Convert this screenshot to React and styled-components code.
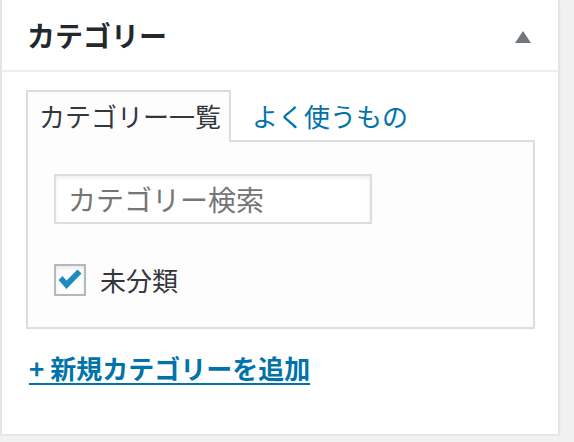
import React, { useState } from "react";
import styled, { createGlobalStyle } from "styled-components";

const GlobalStyle = createGlobalStyle`
  html, body {
    margin: 0;
    padding: 0;
    background: #f1f1f1;
  }
  body {
    font-family: "Noto Sans CJK JP", "Noto Sans", sans-serif;
    color: #32373c;
  }
`;

const PostBox = styled.div`
  width: 556px;
  border: 2px solid #e5e5e5;
  border-top: none;
  background: #fff;
  box-shadow: 0 2px 2px rgba(0, 0, 0, 0.04);
  padding-bottom: 48px;
`;

const Header = styled.div`
  height: 70px;
  display: flex;
  align-items: center;
  justify-content: space-between;
  padding: 0 27px 0 25px;
  border-bottom: 2px solid #eee;
`;

const Title = styled.h2`
  margin: 0;
  font-size: 28px;
  font-weight: 700;
  line-height: 1;
  color: #23282d;
`;

const Toggle = styled.button`
  width: 16px;
  height: 12px;
  padding: 0;
  border: none;
  background: transparent;
  border-left: 8px solid transparent;
  border-right: 8px solid transparent;
  border-bottom: 12px solid #72777c;
  box-sizing: border-box;
  cursor: pointer;
  margin-top: 4px;
`;

const Inside = styled.div`
  padding: 18px 23px 0 24px;
`;

const Tabs = styled.ul`
  display: flex;
  margin: 0;
  padding: 0;
  list-style: none;
`;

const Tab = styled.li`
  position: relative;
  z-index: 1;
  height: 50px;
  margin-bottom: -2px;
  padding: ${(p) => (p.$active ? "0 8px 0 11px" : "0 0 0 19px")};
  border: 2px solid ${(p) => (p.$active ? "#ddd" : "transparent")};
  border-bottom: none;
  background: ${(p) => (p.$active ? "#fdfdfd" : "transparent")};
  font-size: 26px;
  line-height: 48px;
  color: ${(p) => (p.$active ? "#32373c" : "#0073aa")};
  cursor: pointer;
  white-space: nowrap;
`;

const TabsPanel = styled.div`
  border: 2px solid #ddd;
  background: #fdfdfd;
  padding: 32px 26px 31px 26px;
`;

const SearchInput = styled.input`
  display: block;
  box-sizing: border-box;
  width: 318px;
  height: 50px;
  margin: 0;
  padding: 0 12px;
  border: 2px solid #ddd;
  background: #fff;
  box-shadow: inset 0 2px 4px rgba(0, 0, 0, 0.07);
  font-family: inherit;
  font-size: 28px;
  color: #32373c;
  outline: none;

  ::placeholder {
    color: #72777c;
  }
`;

const CheckRow = styled.label`
  display: flex;
  align-items: center;
  gap: 14px;
  margin-top: 40px;
  font-size: 26px;
  line-height: 32px;
  color: #32373c;
  cursor: pointer;
`;

const CheckBox = styled.span`
  width: 32px;
  height: 32px;
  box-sizing: border-box;
  border: 2px solid #b4b9be;
  background: #fff;
  box-shadow: inset 0 2px 4px rgba(0, 0, 0, 0.1);
  display: flex;
  align-items: center;
  justify-content: center;
`;

const AddLink = styled.a`
  display: inline-block;
  margin: 21px 0 0 3px;
  font-size: 26px;
  font-weight: 700;
  line-height: 36px;
  color: #0073aa;
  text-decoration: underline;
  text-decoration-thickness: 2px;
  text-underline-offset: 4px;
  cursor: pointer;
`;

const Check = () => (
  <svg width="26" height="22" viewBox="0 0 26 22">
    <path
      d="M1.5 11 L5.5 7 L9.5 11.5 L20.5 0.5 L24.5 4.5 L9.5 20 Z"
      fill="#1e8cbe"
    />
  </svg>
);

export default function App() {
  const [tab, setTab] = useState("all");
  const [checked, setChecked] = useState(true);

  return (
    <>
      <GlobalStyle />
      <PostBox>
        <Header>
          <Title>カテゴリー</Title>
          <Toggle aria-label="toggle" />
        </Header>
        <Inside>
          <Tabs>
            <Tab $active={tab === "all"} onClick={() => setTab("all")}>
              カテゴリー一覧
            </Tab>
            <Tab $active={tab === "pop"} onClick={() => setTab("pop")}>
              よく使うもの
            </Tab>
          </Tabs>
          <TabsPanel>
            <SearchInput placeholder="カテゴリー検索" />
            <CheckRow onClick={() => setChecked(!checked)}>
              <CheckBox>{checked && <Check />}</CheckBox>
              未分類
            </CheckRow>
          </TabsPanel>
          <AddLink>+ 新規カテゴリーを追加</AddLink>
        </Inside>
      </PostBox>
    </>
  );
}
